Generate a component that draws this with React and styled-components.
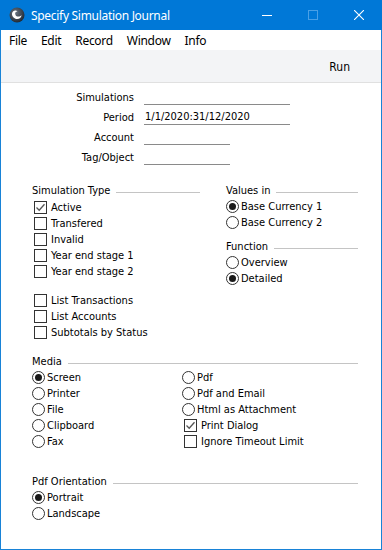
import React from "react";
import styled, { createGlobalStyle } from "styled-components";

const Global = createGlobalStyle`
  html, body { margin: 0; padding: 0; background: #fff; }
  * { box-sizing: border-box; }
`;

const UI = `"DejaVu Sans Condensed", "DejaVu Sans", sans-serif`;
const SYS = `"Noto Sans", "Open Sans", sans-serif`;

const Window = styled.div`
  width: 382px;
  height: 550px;
  display: flex;
  flex-direction: column;
  border: 1px solid #1883d7;
  border-top: none;
  background: #fff;
  font-family: ${UI};
  font-size: 11px;
  color: #000;
`;

const TitleBar = styled.div`
  height: 30px;
  margin: 0 -1px;
  background: #0078d7;
  display: flex;
  align-items: center;
  color: #fff;
  font-family: ${SYS};
  font-size: 12px;
`;

const AppIcon = styled.svg`
  width: 16px;
  height: 16px;
  margin: 0 6px 0 9px;
`;

const Title = styled.div`
  flex: 1;
  letter-spacing: -0.3px;
`;

const Ctrl = styled.div`
  width: 46px;
  height: 30px;
  display: flex;
  align-items: center;
  justify-content: center;
`;

const MenuBar = styled.div`
  height: 20px;
  display: flex;
  align-items: center;
  padding-left: 1px;
  font-family: ${SYS};
  font-size: 12px;
  letter-spacing: -0.3px;
  background: #fff;
`;

const MenuItem = styled.div`
  padding: 0 7px;
`;

const Toolbar = styled.div`
  height: 33px;
  background: #f3f4f6;
  border-bottom: 1px solid #e0e0e0;
  display: flex;
  align-items: center;
  justify-content: flex-end;
  padding-right: 31px;
  padding-top: 1px;
  font-size: 12px;
`;

const Content = styled.div`
  flex: 1;
  padding: 5px 0 0 0;
`;

const FieldGrid = styled.div`
  display: grid;
  grid-template-columns: 133px auto;
  column-gap: 10px;
  grid-auto-rows: 20px;
`;

const Label = styled.div`
  text-align: right;
  line-height: 20px;
`;

const Field = styled.div`
  width: ${(p) => p.$w}px;
  height: 17px;
  border-bottom: 1px solid #8a8a8a;
  padding-left: 1px;
  line-height: 18px;
`;

const Cols = styled.div`
  display: grid;
  grid-template-columns: 168px 132px;
  column-gap: 26px;
  padding-left: 31px;
  margin-top: 14px;
`;

const Col = styled.div`
  display: flex;
  flex-direction: column;
`;

const HeaderRow = styled.div`
  height: 16px;
  display: flex;
  align-items: center;
  margin-top: ${(p) => p.$mt || 0}px;
`;

const HeaderText = styled.span`
  white-space: nowrap;
`;

const HeaderLine = styled.div`
  flex: 1;
  height: 1px;
  background: #c4c4c4;
  margin-left: 6px;
  margin-top: 4px;
`;

const Option = styled.div`
  height: 16px;
  display: flex;
  align-items: center;
  white-space: nowrap;
  margin-top: ${(p) => p.$mt || 0}px;
`;

const Box = styled.div`
  width: 13px;
  height: 13px;
  border: 1px solid #333;
  background: #fff;
  margin: 0 4px 0 2px;
  display: flex;
  align-items: center;
  justify-content: center;
`;

const Radio = styled.div`
  width: 13px;
  height: 13px;
  border-radius: 50%;
  border: 1px solid #333;
  background: #fff;
  margin-right: 2px;
  display: flex;
  align-items: center;
  justify-content: center;
  &::after {
    content: "";
    display: ${(p) => (p.$on ? "block" : "none")};
    width: 7px;
    height: 7px;
    border-radius: 50%;
    background: #1a1a1a;
  }
`;

const Section = styled.div`
  padding: 0 23px 0 31px;
  margin-top: ${(p) => p.$mt}px;
`;

const TwoCol = styled.div`
  display: grid;
  grid-template-columns: 150px auto;
`;

function Check({ on, children, mt }) {
  return (
    <Option $mt={mt}>
      <Box>
        {on && (
          <svg width="11" height="11" viewBox="0 0 11 11">
            <path d="M1.5 5.5 L4.2 8.2 L9.5 2.2" fill="none" stroke="#555" strokeWidth="1.3" />
          </svg>
        )}
      </Box>
      {children}
    </Option>
  );
}

function Rad({ on, children }) {
  return (
    <Option>
      <Radio $on={on} />
      {children}
    </Option>
  );
}

function Header({ children, mt }) {
  return (
    <HeaderRow $mt={mt}>
      <HeaderText>{children}</HeaderText>
      <HeaderLine />
    </HeaderRow>
  );
}

export default function App() {
  return (
    <>
      <Global />
      <Window>
        <TitleBar>
          <AppIcon viewBox="0 0 16 16">
            <defs>
              <radialGradient id="g" cx="0.4" cy="0.35" r="0.7">
                <stop offset="0" stopColor="#6a7480" />
                <stop offset="1" stopColor="#1e2630" />
              </radialGradient>
            </defs>
            <circle cx="8" cy="8" r="7.5" fill="url(#g)" />
            <path d="M3 6.5 C3.5 3.5 7 2.5 8.5 4.5 C6.5 4.5 5.5 6 6.5 8 C7.5 10 11 10 12.5 8 C12.5 11.5 8.5 13 6 11.5 C3.8 10.3 2.8 8.5 3 6.5 Z" fill="#fff" />
          </AppIcon>
          <Title>Specify Simulation Journal</Title>
          <Ctrl>
            <svg width="10" height="10" viewBox="0 0 10 10">
              <path d="M0 5.5 H10" stroke="#fff" strokeWidth="1" />
            </svg>
          </Ctrl>
          <Ctrl>
            <svg width="10" height="10" viewBox="0 0 10 10">
              <rect x="0.5" y="0.5" width="9" height="9" fill="none" stroke="#4aa0e6" strokeWidth="1" />
            </svg>
          </Ctrl>
          <Ctrl>
            <svg width="10" height="10" viewBox="0 0 10 10">
              <path d="M0 0 L10 10 M10 0 L0 10" stroke="#fff" strokeWidth="1.1" />
            </svg>
          </Ctrl>
        </TitleBar>
        <MenuBar>
          <MenuItem>File</MenuItem>
          <MenuItem>Edit</MenuItem>
          <MenuItem>Record</MenuItem>
          <MenuItem>Window</MenuItem>
          <MenuItem>Info</MenuItem>
        </MenuBar>
        <Toolbar>Run</Toolbar>
        <Content>
          <FieldGrid>
            <Label>Simulations</Label>
            <Field $w={146} />
            <Label>Period</Label>
            <Field $w={146}>1/1/2020:31/12/2020</Field>
            <Label>Account</Label>
            <Field $w={86} />
            <Label>Tag/Object</Label>
            <Field $w={86} />
          </FieldGrid>
          <Cols>
            <Col>
              <Header>Simulation Type</Header>
              <Check on mt={1}>Active</Check>
              <Check>Transfered</Check>
              <Check>Invalid</Check>
              <Check>Year end stage 1</Check>
              <Check>Year end stage 2</Check>
              <Check mt={13}>List Transactions</Check>
              <Check>List Accounts</Check>
              <Check>Subtotals by Status</Check>
            </Col>
            <Col>
              <Header>Values in</Header>
              <Rad on>Base Currency 1</Rad>
              <Rad>Base Currency 2</Rad>
              <Header mt={8}>Function</Header>
              <Rad>Overview</Rad>
              <Rad on>Detailed</Rad>
            </Col>
          </Cols>
          <Section $mt={13}>
            <Header>Media</Header>
            <TwoCol>
              <Col>
                <Rad on>Screen</Rad>
                <Rad>Printer</Rad>
                <Rad>File</Rad>
                <Rad>Clipboard</Rad>
                <Rad>Fax</Rad>
              </Col>
              <Col>
                <Rad>Pdf</Rad>
                <Rad>Pdf and Email</Rad>
                <Rad>Html as Attachment</Rad>
                <Check on>Print Dialog</Check>
                <Check>Ignore Timeout Limit</Check>
              </Col>
            </TwoCol>
          </Section>
          <Section $mt={24}>
            <Header>Pdf Orientation</Header>
            <Rad on>Portrait</Rad>
            <Rad>Landscape</Rad>
          </Section>
        </Content>
      </Window>
    </>
  );
}
